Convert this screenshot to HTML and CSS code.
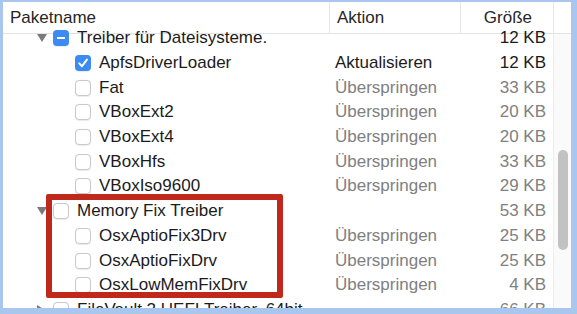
FILE: index.html
```html
<!DOCTYPE html>
<html lang="de">
<head>
    <meta charset="UTF-8">
    <title>Pakete</title>
    <link rel="stylesheet" href="styles.css">
</head>
<body>
    <div class="window">
        <div class="header">
            <div class="col-name">Paketname</div>
            <div class="col-action">Aktion</div>
            <div class="col-size">Größe</div>
            <div class="col-corner"></div>
        </div>

        <div class="content">
            <div class="list">
                <!-- Treiber für Dateisysteme -->
                <div class="row parent">
                    <div class="col-name">
                        <span class="twisty open"></span>
                        <span class="check mixed"></span>
                        <span>Treiber für Dateisysteme.</span>
                    </div>
                    <div class="col-action"></div>
                    <div class="col-size">12 KB</div>
                </div>
                <div class="row child">
                    <div class="col-name">
                        <span class="check checked">
                            <svg viewBox="0 0 16 16" width="16" height="16"><path d="M4.2 8.4 L7 11.2 L11.9 4.6" fill="none" stroke="#fff" stroke-width="2" stroke-linecap="round" stroke-linejoin="round"/></svg>
                        </span>
                        <span>ApfsDriverLoader</span>
                    </div>
                    <div class="col-action">Aktualisieren</div>
                    <div class="col-size">12 KB</div>
                </div>
                <div class="row child skip">
                    <div class="col-name"><span class="check"></span><span>Fat</span></div>
                    <div class="col-action">Überspringen</div>
                    <div class="col-size">33 KB</div>
                </div>
                <div class="row child skip">
                    <div class="col-name"><span class="check"></span><span>VBoxExt2</span></div>
                    <div class="col-action">Überspringen</div>
                    <div class="col-size">20 KB</div>
                </div>
                <div class="row child skip">
                    <div class="col-name"><span class="check"></span><span>VBoxExt4</span></div>
                    <div class="col-action">Überspringen</div>
                    <div class="col-size">20 KB</div>
                </div>
                <div class="row child skip">
                    <div class="col-name"><span class="check"></span><span>VBoxHfs</span></div>
                    <div class="col-action">Überspringen</div>
                    <div class="col-size">33 KB</div>
                </div>
                <div class="row child skip">
                    <div class="col-name"><span class="check"></span><span>VBoxIso9600</span></div>
                    <div class="col-action">Überspringen</div>
                    <div class="col-size">29 KB</div>
                </div>

                <!-- Memory Fix Treiber -->
                <div class="row parent skip">
                    <div class="col-name">
                        <span class="twisty open"></span>
                        <span class="check"></span>
                        <span class="name">Memory Fix Treiber</span>
                    </div>
                    <div class="col-action"></div>
                    <div class="col-size">53 KB</div>
                </div>
                <div class="row child skip">
                    <div class="col-name"><span class="check"></span><span>OsxAptioFix3Drv</span></div>
                    <div class="col-action">Überspringen</div>
                    <div class="col-size">25 KB</div>
                </div>
                <div class="row child skip">
                    <div class="col-name"><span class="check"></span><span>OsxAptioFixDrv</span></div>
                    <div class="col-action">Überspringen</div>
                    <div class="col-size">25 KB</div>
                </div>
                <div class="row child skip">
                    <div class="col-name"><span class="check"></span><span>OsxLowMemFixDrv</span></div>
                    <div class="col-action">Überspringen</div>
                    <div class="col-size">4 KB</div>
                </div>

                <!-- FileVault -->
                <div class="row parent skip">
                    <div class="col-name">
                        <span class="twisty"></span>
                        <span class="check"></span>
                        <span class="name">FileVault 2 UEFI Treiber, 64bit</span>
                    </div>
                    <div class="col-action"></div>
                    <div class="col-size">66 KB</div>
                </div>
            </div>

            <div class="scrollbar">
                <div class="thumb"></div>
            </div>
        </div>

        <div class="highlight"></div>
    </div>
</body>
</html>
```

FILE: styles.css
```css
body {
    margin: 0;
    background-color: #a9c7ee;
    font-family: 'Liberation Sans', Arial, sans-serif;
    font-size: 17px;
    color: #1b1b1b;
}

.window {
    position: relative;
    width: 568px;
    height: 306px;
    margin: 2px 6px 6px 3px;
    background: #fff;
    overflow: hidden;
}

/* Header */
.header {
    display: grid;
    grid-template-columns: 326px 131px 93px 18px;
    height: 31px;
    border-bottom: 1px solid #e3e3e3;
    line-height: 32px;
    color: #262626;
}

.header .col-name {
    padding-left: 7px;
}

.header .col-action {
    border-left: 1px solid #e6e6e6;
    padding-left: 7px;
}

.header .col-size {
    border-left: 1px solid #e6e6e6;
    text-align: right;
    padding-right: 21px;
}

.header .col-corner {
    border-left: 1px solid #e6e6e6;
}

/* Rows */
.content {
    display: flex;
    height: 274px;
}

.list {
    width: 550px;
    margin-top: -8px;
}

.row {
    display: grid;
    grid-template-columns: 326px 131px 93px;
    height: 24.7px;
    align-items: center;
    white-space: nowrap;
}

.row .col-name {
    display: flex;
    align-items: center;
    gap: 8px;
}

.row.parent .col-name {
    padding-left: 34px;
}

.row.child .col-name {
    padding-left: 72px;
}

.row .col-action {
    padding-left: 6px;
}

.row .col-size {
    text-align: right;
    padding-right: 7px;
}

.row.skip .col-action,
.row.skip .col-size {
    color: #808080;
}

.twisty {
    width: 0;
    height: 0;
    margin-right: -2px;
    border-left: 5px solid transparent;
    border-right: 5px solid transparent;
    border-top: 8px solid #7a7a7a;
}

.twisty:not(.open) {
    border-top: 5px solid transparent;
    border-bottom: 5px solid transparent;
    border-left: 8px solid #7a7a7a;
    border-right: 0;
    margin-right: 0;
}

.check {
    flex: none;
    width: 16px;
    height: 16px;
    box-sizing: border-box;
    border: 1px solid #c9c9c9;
    border-radius: 4px;
    background: #fff;
    box-shadow: 0 0.5px 1px rgba(0, 0, 0, 0.08);
}

.check.checked,
.check.mixed {
    border: none;
    background: #3b8bf2;
}

.check svg {
    display: block;
}

.check.mixed {
    position: relative;
}

.check.mixed::after {
    content: "";
    position: absolute;
    left: 4px;
    right: 4px;
    top: 7px;
    height: 2px;
    background: #fff;
}

/* Scrollbar */
.scrollbar {
    width: 17px;
    border-left: 1px solid #ececec;
    background: #fafafa;
}

.thumb {
    width: 10px;
    height: 100px;
    margin: 116px 0 0 4px;
    border-radius: 5px;
    background: #c2c2c2;
}

/* Red annotation box */
.highlight {
    position: absolute;
    left: 43px;
    top: 192px;
    width: 237px;
    height: 104px;
    box-sizing: border-box;
    border: 6px solid #c0281c;
    border-radius: 2px;
}
```
